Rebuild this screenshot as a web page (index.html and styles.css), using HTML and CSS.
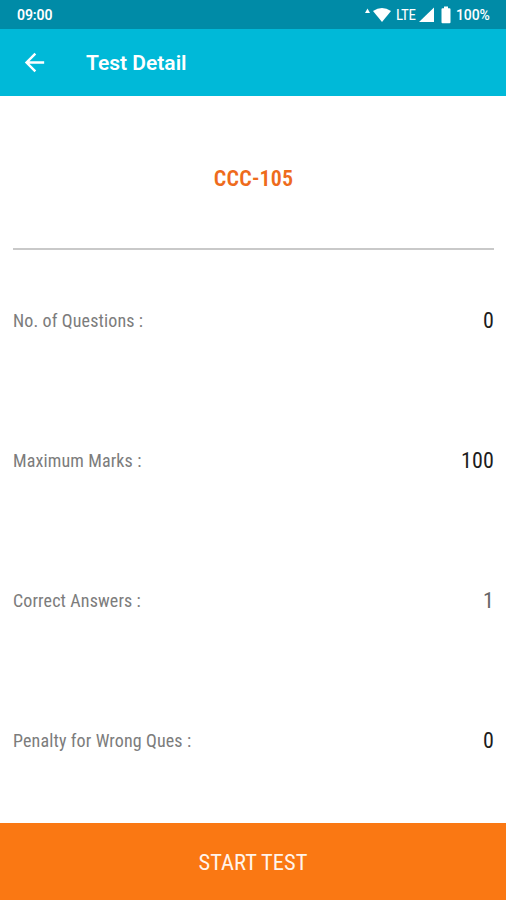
FILE: index.html
```html
<!DOCTYPE html>
<html lang="en">
<head>
	<meta charset="UTF-8">
	<meta name="viewport" content="width=device-width, initial-scale=1.0">
	<title>Test Detail</title>
	<link rel="stylesheet" href="styles.css">
</head>
<body>
	<div class="status-bar">
		<span class="time">09:00</span>
		<div class="status-icons">
			<svg class="icon-wifi" width="27" height="18" viewBox="0 0 27 18">
				<path d="M0 7 L2.500 2.500 L5 7Z"/>
				<path d="M8 5 Q17 -1 26 5 L17 16Z"/>
			</svg>
			<span class="network">LTE</span>
			<svg class="icon-signal" width="15" height="18" viewBox="0 0 15 18">
				<path d="M15 1.500 V16 H0Z"/>
			</svg>
			<svg class="icon-battery" width="10" height="18" viewBox="0 0 10 18">
				<path d="M3 0.500 H7 V2.300 H8.500 Q9.500 2.300 9.500 3.300 V16.200 Q9.500 17.200 8.500 17.200 H1.500 Q0.500 17.200 0.500 16.200 V3.300 Q0.500 2.300 1.500 2.300 H3Z"/>
			</svg>
			<span class="percent">100%</span>
		</div>
	</div>
	<div class="tool-bar">
		<a href="#" class="btn-back" aria-label="Back">
			<svg width="29" height="29" viewBox="0 0 24 24"><path d="M20 11H7.830l5.590-5.590L12 4l-8 8 8 8 1.410-1.410L7.830 13H20v-2z"/></svg>
		</a>
		<h1 class="title">Test Detail</h1>
	</div>
	<div class="container">
		<h2 class="test-name">CCC-105</h2>
		<ul class="list-info">
			<li class="item-info"><span class="label">No. of Questions :</span><span class="value">0</span></li>
			<li class="item-info"><span class="label">Maximum Marks :</span><span class="value">100</span></li>
			<li class="item-info"><span class="label">Correct Answers :</span><span class="value correct">1</span></li>
			<li class="item-info"><span class="label">Penalty for Wrong Ques :</span><span class="value">0</span></li>
		</ul>
	</div>
	<a href="#" class="btn-start">START TEST</a>
</body>
</html>
```

FILE: styles.css
```css
*{ box-sizing: border-box;}
body{
	margin: 0; height: 900px; display: flex; flex-direction: column;
	font-family: "Roboto Condensed", Roboto, sans-serif; background-color: #fff;
}
svg{ display: block; fill: #fff;}
.status-bar{
	height: 29px; background-color: #008ba7; color: #fff; padding: 0 15px 0 17px;
	display: flex; align-items: center; justify-content: space-between;
	font-size: 14px; font-weight: 500; line-height: 29px;
}
.time{
	font-family: Roboto, sans-serif; font-weight: 600; letter-spacing: -0.100px;
	padding-top: 2px;
}
.status-icons{ display: flex; align-items: center;}
.network{
	width: 21px; margin: 1px 2px 0 4px; font-size: 15px; font-weight: 400;
	letter-spacing: -0.200px;
}
.icon-battery{ margin: 0 5px 0 7px;}
.percent{
	width: 35px; padding-top: 2px; font-family: Roboto, sans-serif;
	letter-spacing: -0.100px; white-space: nowrap;
}
.tool-bar{
	height: 67px; background-color: #00b9d8; display: flex; align-items: center;
	padding-left: 20px;
}
.title{
	margin: 1px 0 0 37px; font-family: Roboto, sans-serif; font-size: 21px;
	font-weight: 600; line-height: 24px; color: #fff;
}
.container{ flex: 1; padding: 0 12px 0 13px;}
.test-name{
	height: 154px; margin: 0; padding-top: 67px; border-bottom: 2px solid #c9c9c9;
	font-size: 22px; font-weight: 600; line-height: 32px; letter-spacing: 0.200px;
	color: #ee6b1c; text-align: center;
}
.list-info{ list-style: none; margin: 0; padding: 0;}
.item-info{
	height: 140px; display: flex; align-items: center; justify-content: space-between;
}
.label{
	font-size: 18px; font-weight: 400; letter-spacing: 0.130px; color: #7c7c7c;
}
.value{ font-size: 22px; font-weight: 400; letter-spacing: 0.100px; color: #1c1c1c;}
.value.correct{ color: #666;}
.btn-start{
	height: 77px; background-color: #fa7813; color: #fff4ec; text-align: center;
	font-size: 22.500px; font-weight: 400; line-height: 78px; text-decoration: none;
}
```
